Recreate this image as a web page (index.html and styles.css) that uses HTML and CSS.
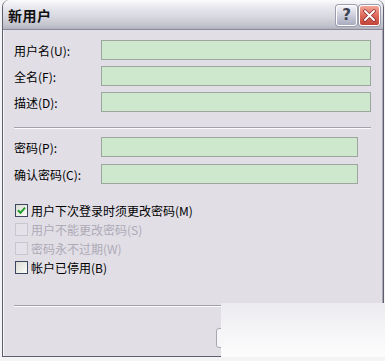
FILE: index.html
```html
<!DOCTYPE html>
<html lang="zh-CN">
<head>
    <meta charset="UTF-8">
    <title>新用户</title>
    <link rel="stylesheet" href="styles.css">
</head>
<body>

<div class="window">
    <div class="titlebar">
        <span class="title">新用户</span>
        <div class="title-buttons">
            <span class="tbtn help">?</span>
            <span class="tbtn close">
                <svg width="13" height="13" viewBox="0 0 13 13">
                    <path d="M2 2 L11 11 M11 2 L2 11" stroke="#8a2a2a" stroke-width="3.4" stroke-linecap="round"/>
                    <path d="M2 2 L11 11 M11 2 L2 11" stroke="#ffffff" stroke-width="2" stroke-linecap="round"/>
                </svg>
            </span>
        </div>
    </div>

    <div class="content">
        <div class="group">
            <div class="row">
                <label class="lbl">用户名(U):</label>
                <div class="field wide"></div>
            </div>
            <div class="row">
                <label class="lbl">全名(F):</label>
                <div class="field wide"></div>
            </div>
            <div class="row">
                <label class="lbl">描述(D):</label>
                <div class="field wide"></div>
            </div>
        </div>

        <div class="sep sep-top"></div>

        <div class="group group-pw">
            <div class="row">
                <label class="lbl">密码(P):</label>
                <div class="field narrow"></div>
            </div>
            <div class="row">
                <label class="lbl">确认密码(C):</label>
                <div class="field narrow"></div>
            </div>
        </div>

        <div class="checks">
            <div class="check">
                <span class="box">
                    <svg width="9" height="9" viewBox="0 0 9 9">
                        <path d="M1 4.2 L3.5 6.8 L8 1.6" fill="none" stroke="#1f9e2a" stroke-width="2"/>
                    </svg>
                </span>
                <span>用户下次登录时须更改密码(M)</span>
            </div>
            <div class="check disabled">
                <span class="box"></span>
                <span>用户不能更改密码(S)</span>
            </div>
            <div class="check disabled">
                <span class="box"></span>
                <span>密码永不过期(W)</span>
            </div>
            <div class="check">
                <span class="box"></span>
                <span>帐户已停用(B)</span>
            </div>
        </div>

        <div class="sep sep-bottom"></div>

        <div class="buttons">
            <span class="btn"></span>
        </div>
    </div>

    <div class="cover"></div>
</div>

</body>
</html>
```

FILE: styles.css
```css
body {
    margin: 0;
    background: #f4f4f6;
    font-family: "Noto Sans CJK SC", "DejaVu Sans", sans-serif;
    font-size: 12px;
    color: #000;
}
.window {
    position: relative;
    width: 380px;
    height: 356px;
    margin-left: 2px;
    border: 1px solid #5e5e6e;
    border-top: none;
    border-radius: 7px 7px 0 0;
    background: #e1dee6;
    box-shadow: inset 1px 0 0 #f6f6f8, inset -1px 0 0 #a8a8b4;
}
.titlebar {
    display: flex;
    align-items: center;
    justify-content: space-between;
    height: 29px;
    padding: 0 3px 0 5px;
    border-bottom: 1px solid #8a8a98;
    border-radius: 7px 7px 0 0;
    background: linear-gradient(to bottom, #fbfbfc 0%, #e8e8ee 25%, #d6d6de 60%, #c2c2cc 88%, #b2b2be 100%);
}
.title {
    font-weight: bold;
    font-size: 14px;
    letter-spacing: 0.5px;
    color: #111;
    padding-top: 1px;
}
.title-buttons {
    display: flex;
    gap: 2px;
    padding-top: 1px;
}
.tbtn {
    display: flex;
    align-items: center;
    justify-content: center;
    width: 19px;
    height: 19px;
    border: 1px solid #fff;
    border-radius: 3px;
    box-shadow: 0 0 0 1px #9c9cac;
}
.help {
    background: linear-gradient(to bottom, #f2f2f8, #c8cad8 55%, #a8abbf);
    color: #3e4250;
    font-family: "DejaVu Sans", sans-serif;
    font-weight: bold;
    font-size: 15px;
}
.close {
    background: linear-gradient(to bottom, #f2a898, #dd6a5c 50%, #c24238);
}
.content {
    padding: 10px 0 0 11px;
}
.group {
    display: flex;
    flex-direction: column;
    gap: 6px;
}
.group-pw {
    gap: 7px;
    margin-top: 8px;
}
.row {
    display: flex;
    align-items: center;
    height: 20px;
}
.lbl {
    width: 87px;
    padding-top: 1px;
}
.field {
    box-sizing: border-box;
    height: 20px;
    border: 1px solid #9ea59e;
    background: #cde8cc;
}
.wide {
    width: 270px;
}
.narrow {
    width: 257px;
}
.sep {
    width: 357px;
    border-top: 1px solid #a2a2aa;
    border-bottom: 1px solid #fbfbfd;
}
.sep-top {
    margin-top: 15px;
}
.checks {
    margin-top: 17px;
    padding-left: 1px;
}
.check {
    display: flex;
    align-items: center;
    gap: 3px;
    height: 19px;
}
.box {
    box-sizing: border-box;
    display: flex;
    align-items: center;
    justify-content: center;
    width: 13px;
    height: 13px;
    border: 1px solid #3c4660;
    background: linear-gradient(135deg, #dcdcd4, #fbfbf9);
}
.disabled {
    color: #aeaab6;
}
.disabled .box {
    border-color: #c8c6ce;
    background: #e4e2e8;
}
.sep-bottom {
    margin-top: 28px;
}
.buttons {
    display: flex;
    padding: 21px 0 0 202px;
}
.btn {
    width: 75px;
    height: 18px;
    border: 1px solid #a8a8b0;
    border-radius: 3px;
    background: #f6f6f8;
}
.cover {
    position: absolute;
    left: 218px;
    top: 303px;
    right: -4px;
    bottom: -2px;
    background: linear-gradient(to bottom, #ebebf0 0%, #f4f4f7 45%, #fdfdfd 100%);
}
```
